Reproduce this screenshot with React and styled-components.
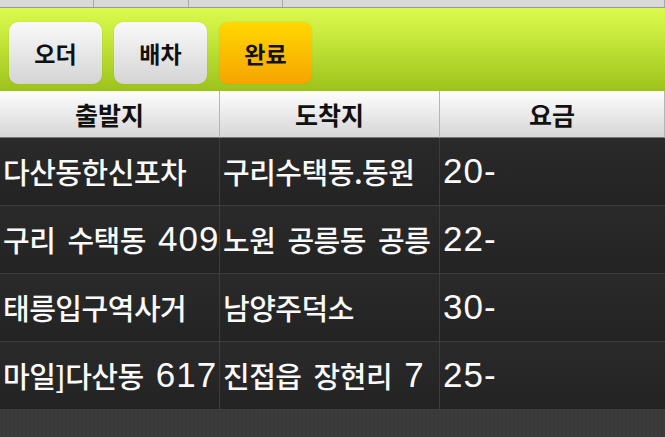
import React from "react";
import styled, { createGlobalStyle } from "styled-components";

const GlobalStyle = createGlobalStyle`
  html, body {
    margin: 0;
    padding: 0;
    background: #383838;
    font-family: "Noto Sans CJK KR", "Noto Sans", sans-serif;
  }
`;

const Screen = styled.div`
  width: 665px;
  height: 437px;
  overflow: hidden;
  background: repeating-linear-gradient(
      90deg,
      rgba(255, 255, 255, 0.02) 0px,
      rgba(0, 0, 0, 0.03) 2px,
      rgba(255, 255, 255, 0.02) 4px
    ),
    #393939;
`;

const TopStrip = styled.div`
  display: grid;
  grid-template-columns: 94px 95px 94px 1fr;
  height: 7px;
  background: #d9d9d9;
  border-bottom: 1px solid #9a9a9a;
`;

const StripCell = styled.div`
  border-right: 1px solid #a9a9a9;
`;

const ToolBar = styled.div`
  display: flex;
  gap: 12px;
  height: 83px;
  box-sizing: border-box;
  padding: 14px 9px 7px;
  background: linear-gradient(#dcfa4e, #c4e63a 40%, #9dc21b);
`;

const TabButton = styled.div`
  width: 93px;
  display: flex;
  align-items: center;
  justify-content: center;
  border-radius: 9px;
  font-size: 23px;
  font-weight: 700;
  color: #111;
  background: ${(p) =>
    p.$active
      ? "linear-gradient(#ffd800, #f6a400)"
      : "linear-gradient(#fafafa, #d4d4d4)"};
  box-shadow: 0 0 1px rgba(0, 0, 0, 0.25);
`;

const Grid = styled.div`
  display: grid;
  grid-template-columns: 220px 220px 1fr;
`;

const HeadCell = styled.div`
  height: 46px;
  display: flex;
  align-items: center;
  justify-content: center;
  font-size: 25px;
  font-weight: 700;
  color: #111;
  background: linear-gradient(#fefefe, #d6d6d6);
  border-right: 1px solid #b5b5b5;
  border-bottom: 1px solid #777;
  &:last-child {
    border-right: none;
  }
`;

const Cell = styled.div`
  height: 68px;
  display: flex;
  align-items: center;
  padding-left: 3px;
  padding-bottom: 2px;
  box-sizing: border-box;
  white-space: pre;
  overflow: hidden;
  font-size: 29px;
  letter-spacing: -0.5px;
  word-spacing: 6px;
  font-weight: 500;
  color: #fafafa;
  background: linear-gradient(#2a2a2a, #232323);
  border-right: 1px solid #3d3d3d;
  border-bottom: 1px solid #3d3d3d;
  &:nth-child(3n) {
    border-right: none;
  }
`;

// digits in the source app use a wider latin face than the hangul
const Num = styled.span`
  font-family: "Liberation Sans", sans-serif;
  font-size: 35px;
  letter-spacing: 1px;
`;

const rows = [
  ["다산동한신포차", "구리수택동.동원", "20-"],
  ["구리 수택동 409", "노원 공릉동 공릉", "22-"],
  ["태릉입구역사거", "남양주덕소", "30-"],
  ["마일]다산동 617", "진접읍 장현리 7", "25-"],
];

const CellText = ({ text }) =>
  text
    .split(/([0-9-]+)/)
    .map((part, i) =>
      /^[0-9-]+$/.test(part) ? <Num key={i}>{part}</Num> : part
    );

export default function App() {
  return (
    <Screen>
      <GlobalStyle />
      <TopStrip>
        <StripCell />
        <StripCell />
        <StripCell />
        <StripCell />
      </TopStrip>
      <ToolBar>
        <TabButton>오더</TabButton>
        <TabButton>배차</TabButton>
        <TabButton $active>완료</TabButton>
      </ToolBar>
      <Grid>
        <HeadCell>출발지</HeadCell>
        <HeadCell>도착지</HeadCell>
        <HeadCell>요금</HeadCell>
        {rows.map((r, i) =>
          r.map((t, j) => (
            <Cell key={i + "-" + j}>
              <CellText text={t} />
            </Cell>
          ))
        )}
      </Grid>
    </Screen>
  );
}
